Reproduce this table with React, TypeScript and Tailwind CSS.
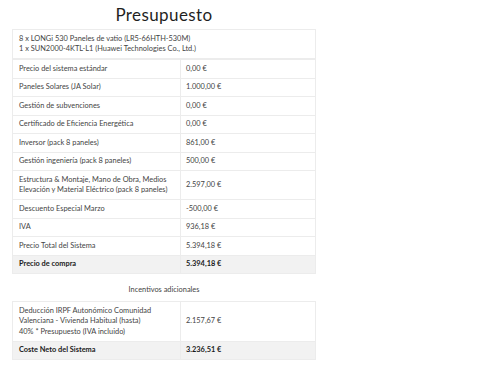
import React from "react";

const rows: { label: string[]; value: string }[] = [
    { label: ["Precio del sistema estándar"], value: "0,00 €" },
    { label: ["Paneles Solares (JA Solar)"], value: "1.000,00 €" },
    { label: ["Gestión de subvenciones"], value: "0,00 €" },
    { label: ["Certificado de Eficiencia Energética"], value: "0,00 €" },
    { label: ["Inversor (pack 8 paneles)"], value: "861,00 €" },
    { label: ["Gestión ingeniería (pack 8 paneles)"], value: "500,00 €" },
    {
        label: [
            "Estructura & Montaje, Mano de Obra, Medios",
            "Elevación y Material Eléctrico (pack 8 paneles)",
        ],
        value: "2.597,00 €",
    },
    { label: ["Descuento Especial Marzo"], value: "-500,00 €" },
    { label: ["IVA"], value: "936,18 €" },
    { label: ["Precio Total del Sistema"], value: "5.394,18 €" },
];

const Row: React.FC<{ label: string[]; value: string; total?: boolean }> = ({
    label,
    value,
    total,
}) => (
    <div
        className={`grid grid-cols-[168px_1fr] border-t border-[#ececec] first:border-t-0 ${
            total ? "bg-[#f2f2f2] font-bold text-[#1a1a1a]" : ""
        }`}
    >
        <div className="px-[6px] py-[3.5px] border-r border-[#ececec] flex flex-col justify-center">
            {label.map((l) => (
                <span key={l}>{l}</span>
            ))}
        </div>
        <div className="px-[5px] py-[3.5px] flex items-center">{value}</div>
    </div>
);

const App: React.FC = () => {
    return (
        <div
            className="w-[500px] h-[378px] bg-white text-[#444] text-[7.4px] leading-[10.5px]"
            style={{ fontFamily: "Lato, 'Liberation Sans', sans-serif" }}
        >
            <div className="w-[304px] ml-[12px]">
                <h1 className="text-center text-[17px] leading-[29px] text-[#1f1f1f] font-normal tracking-[0.4px]">
                    Presupuesto
                </h1>

                <div className="border border-[#ececec]">
                    <div className="px-[6px] h-[29px] flex flex-col justify-center border-b border-[#ececec] leading-[10px]">
                        <span>8 x LONGi 530 Paneles de vatio (LR5-66HTH-530M)</span>
                        <span>1 x SUN2000-4KTL-L1 (Huawei Technologies Co., Ltd.)</span>
                    </div>
                    {rows.map((r) => (
                        <Row key={r.label[0]} label={r.label} value={r.value} />
                    ))}
                    <Row label={["Precio de compra"]} value="5.394,18 €" total />
                </div>

                <p className="text-center mt-[11px] mb-[6px] leading-[10px]">
                    Incentivos adicionales
                </p>

                <div className="border border-[#ececec]">
                    <Row
                        label={[
                            "Deducción IRPF Autonómico Comunidad",
                            "Valenciana - Vivienda Habitual (hasta)",
                            "40% * Presupuesto (IVA incluido)",
                        ]}
                        value="2.157,67 €"
                    />
                    <Row label={["Coste Neto del Sistema"]} value="3.236,51 €" total />
                </div>
            </div>
        </div>
    );
};

export default App;
